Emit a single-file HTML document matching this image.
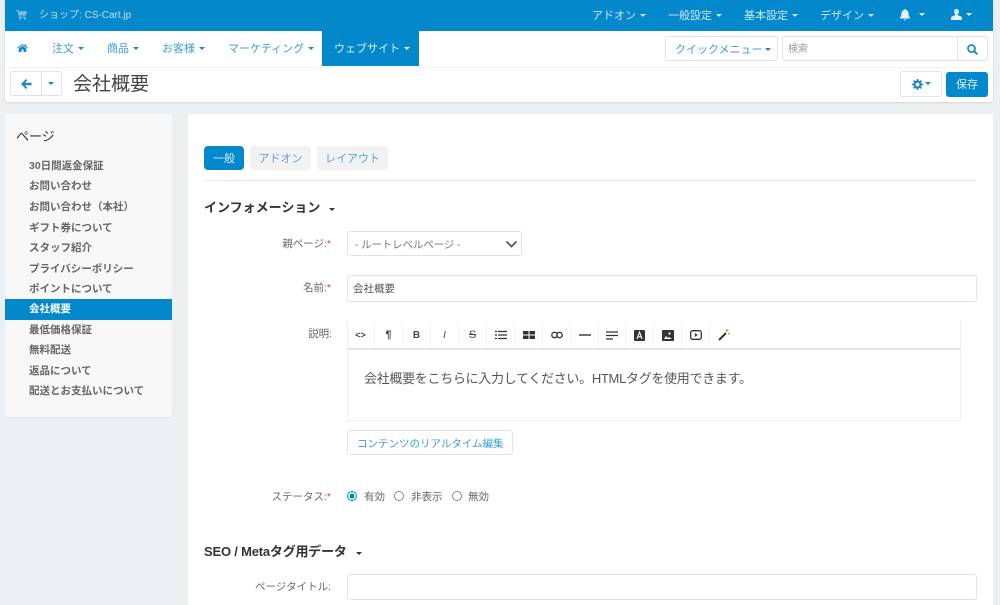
<!DOCTYPE html>
<html lang="ja"><head><meta charset="utf-8">
<style>
*{box-sizing:border-box}
html,body{margin:0;padding:0}
body{width:1000px;height:605px;overflow:hidden;position:relative;background:#edf0f3;font-family:"Liberation Sans","Noto Sans CJK JP",sans-serif;font-size:11px;color:#555}
.a{position:absolute;white-space:nowrap}
.car{display:inline-block;width:0;height:0;border-left:3.5px solid transparent;border-right:3.5px solid transparent;border-top:3.5px solid currentColor;vertical-align:2px;margin-left:3.5px}
.top{color:#cfe8f5;font-size:11px;line-height:14px;top:9px}
.nav{color:#3b9fd6;font-size:11px;line-height:14px;top:42px}
.box{position:absolute;background:#fff;border:1px solid #dfe4e8;border-radius:3px}
.side{left:29px;font-size:10.5px;font-weight:bold;color:#666;line-height:14px}
.lab{text-align:right;right:668px;font-size:10.5px;color:#666;line-height:14px}
.lab i{color:#e33;font-style:normal}
.tb{position:absolute;top:322px;width:28px;height:26px;border-right:1px solid #f3f3f3;display:flex;align-items:center;justify-content:center;font-size:10px;color:#444}
</style></head><body>
<div class="a" style="left:5px;top:0;width:988px;height:102px;background:#fff;border-radius:0 0 3px 3px;box-shadow:0 1px 2px rgba(0,0,0,.12)"></div>
<div class="a" style="left:5px;top:0;width:988px;height:31px;background:#0388cc"></div>
<svg class="a" style="left:16px;top:9px" width="12" height="11" viewBox="0 0 12 11"><path d="M0 1h2.200l.5 1.200H11L9.800 6.500H3.600l.3 1.200H10v1H3L1.600 2H0z" fill="#7dbfe3"/><circle cx="4" cy="9.800" r="1" fill="#7dbfe3"/><circle cx="9" cy="9.800" r="1" fill="#7dbfe3"/></svg>
<div class="a top" style="left:39px;font-size:10px;color:#bfe0f2">ショップ: CS-Cart.jp</div>
<div class="a top" style="left:592px">アドオン<span class="car"></span></div>
<div class="a top" style="left:668px">一般設定<span class="car"></span></div>
<div class="a top" style="left:744px">基本設定<span class="car"></span></div>
<div class="a top" style="left:820px">デザイン<span class="car"></span></div>
<svg class="a" style="left:899px;top:9px" width="12" height="12" viewBox="0 0 12 12"><path d="M6 0a1 1 0 0 1 1 1c2 .5 2.600 2 2.600 4 0 2 .9 3 1.400 3.600V9.500H1V8.600C1.500 8 2.400 7 2.400 5c0-2 .6-3.500 2.600-4a1 1 0 0 1 1-1zM4.800 10.200h2.400a1.200 1.200 0 0 1-2.400 0z" fill="#e3f1f9"/></svg>
<div class="a" style="left:915px;top:9px;color:#e3f1f9"><span class="car"></span></div>
<svg class="a" style="left:951px;top:9px" width="11" height="11" viewBox="0 0 11 11"><path d="M5.500 0c1.500 0 2.300 1.100 2.300 2.600 0 1.200-.5 2.200-1.100 2.800v.8c1.700.5 4.300 1 4.300 2.700V11H0V8.900c0-1.700 2.600-2.200 4.300-2.700v-.8C3.700 4.800 3.200 3.800 3.200 2.600 3.200 1.100 4 0 5.500 0z" fill="#e3f1f9"/></svg>
<div class="a" style="left:962px;top:9px;color:#e3f1f9"><span class="car"></span></div>

<svg class="a" style="left:17px;top:44px" width="11" height="8" viewBox="0 0 11 8"><path d="M5.500 0L0 3.800l.6.700 4.900-3.400 4.900 3.400.6-.7-1.800-1.300V.4H7.800v1.200zM1.700 4.500V8h2.800V5.600h2V8h2.800V4.500L5.500 1.900z" fill="#1b87c9"/></svg>
<div class="a nav" style="left:52px">注文<span class="car" style="color:#1b87c9"></span></div>
<div class="a nav" style="left:107px">商品<span class="car" style="color:#1b87c9"></span></div>
<div class="a nav" style="left:162px">お客様<span class="car" style="color:#1b87c9"></span></div>
<div class="a nav" style="left:228px">マーケティング<span class="car" style="color:#1b87c9"></span></div>
<div class="a" style="left:322px;top:31px;width:97px;height:35px;background:#0388cc"></div>
<div class="a nav" style="left:334px;color:#e3f1f9">ウェブサイト<span class="car"></span></div>
<div class="a" style="left:5px;top:67px;width:988px;height:1px;background:#f2f2f2"></div>
<div class="box" style="left:665px;top:36px;width:113px;height:25px"></div>
<div class="a nav" style="left:675px;top:43px;">クイックメニュー<span class="car" style="color:#1b87c9;margin-left:2px"></span></div>
<div class="box" style="left:782px;top:36px;width:206px;height:25px"></div>
<div class="a" style="left:957px;top:37px;width:1px;height:23px;background:#dfe4e8"></div>
<div class="a" style="left:788px;top:43px;font-size:10px;line-height:14px;color:#999">検索</div>
<svg class="a" style="left:967px;top:44px" width="11" height="11" viewBox="0 0 11 11"><circle cx="4.500" cy="4.500" r="3.500" fill="none" stroke="#1b87c9" stroke-width="1.700"/><path d="M7 7l3.300 3.300" stroke="#1b87c9" stroke-width="2"/></svg>

<div class="box" style="left:10px;top:71px;width:52px;height:25px"></div>
<div class="a" style="left:41px;top:72px;width:1px;height:23px;background:#dfe4e8"></div>
<svg class="a" style="left:21px;top:79px" width="11" height="10" viewBox="0 0 11 10"><path d="M5 0L0 5l5 5 1.300-1.300L4 6.200h6.500V3.800H4l2.300-2.500z" fill="#1b87c9"/></svg>
<div class="a" style="left:44px;top:78px;color:#1b87c9"><span class="car"></span></div>
<div class="a" style="left:73px;top:73px;font-size:19px;line-height:24px;color:#444">会社概要</div>
<div class="box" style="left:900px;top:71px;width:42px;height:26px"></div>
<svg class="a" style="left:912px;top:79px" width="11" height="11" viewBox="0 0 11 11"><circle cx="5.500" cy="5.500" r="3" fill="none" stroke="#1b87c9" stroke-width="2.200"/><path d="M5.500 0v11M0 5.500h11M1.600 1.600l7.800 7.800M9.400 1.600L1.600 9.400" stroke="#1b87c9" stroke-width="1.600" stroke-dasharray="2 7.200 2 0"/></svg>
<div class="a" style="left:921px;top:78px;color:#1b87c9"><span class="car"></span></div>
<div class="a" style="left:946px;top:72px;width:42px;height:25px;background:#0388cc;border-radius:3px;color:#e3f1f9;font-size:11px;text-align:center;line-height:26px">保存</div>

<!-- sidebar -->
<div class="a" style="left:5px;top:114px;width:167px;height:303px;background:#f8f8f8;border-radius:3px;box-shadow:0 1px 1px rgba(0,0,0,.06)"></div>
<div class="a" style="left:16px;top:128px;font-size:13px;line-height:17px;color:#333">ページ</div>
<div class="a side" style="top:159px">30日間返金保証</div>
<div class="a side" style="top:179px">お問い合わせ</div>
<div class="a side" style="top:200px">お問い合わせ（本社）</div>
<div class="a side" style="top:221px">ギフト券について</div>
<div class="a side" style="top:241px">スタッフ紹介</div>
<div class="a side" style="top:262px">プライバシーポリシー</div>
<div class="a side" style="top:282px">ポイントについて</div>
<div class="a" style="left:5px;top:299px;width:167px;height:21px;background:#0388cc"></div>
<div class="a side" style="top:302px;color:#fff">会社概要</div>
<div class="a side" style="top:323px">最低価格保証</div>
<div class="a side" style="top:343px">無料配送</div>
<div class="a side" style="top:364px">返品について</div>
<div class="a side" style="top:384px">配送とお支払いについて</div>

<!-- main -->
<div class="a" style="left:188px;top:114px;width:805px;height:491px;background:#fff;border-radius:3px 3px 0 0"></div>
<div class="a" style="left:204px;top:146px;width:40px;height:24px;background:#0388cc;border-radius:4px;color:#d5ebf7;text-align:center;line-height:26px;font-size:11px">一般</div>
<div class="a" style="left:250px;top:146px;width:61px;height:24px;background:#f2f2f2;border-radius:4px;color:#5f9fcb;text-align:center;line-height:26px;font-size:11px">アドオン</div>
<div class="a" style="left:317px;top:146px;width:71px;height:24px;background:#f2f2f2;border-radius:4px;color:#5f9fcb;text-align:center;line-height:26px;font-size:11px">レイアウト</div>
<div class="a" style="left:204px;top:180px;width:772px;height:1px;background:#e8e8e8"></div>
<div class="a" style="left:204px;top:199px;font-size:13px;font-weight:bold;line-height:17px;color:#333">インフォメーション<span class="car" style="margin-left:9px;vertical-align:1px"></span></div>

<div class="a lab" style="top:237px;right:669px">親ページ:<i>*</i></div>
<div class="box" style="left:347px;top:231px;width:175px;height:25px"></div>
<div class="a" style="left:355px;top:238px;font-size:10.5px;line-height:14px;color:#777;letter-spacing:-.15px">- ルートレベルページ -</div>
<svg class="a" style="left:505px;top:240px" width="13" height="8" viewBox="0 0 13 8"><path d="M1.500 1.500l5 5 5-5" fill="none" stroke="#555" stroke-width="1.700"/></svg>

<div class="a lab" style="top:281px;right:669px">名前:<i>*</i></div>
<div class="box" style="left:347px;top:275px;width:630px;height:27px"></div>
<div class="a" style="left:353px;top:282px;font-size:10.5px;line-height:14px;color:#555">会社概要</div>

<div class="a lab" style="top:327px;right:668px">説明:</div>
<div class="a" style="left:347px;top:321px;width:614px;height:100px;background:#fff;border:1px solid #f0f0f0;border-top:0"></div>
<div class="a" style="left:347px;top:348px;width:614px;height:2px;background:#e6e6e6"></div>
<div class="tb" style="left:347px;font-weight:bold;font-size:9px">&lt;&gt;</div>
<div class="tb" style="left:375px;font-weight:bold;font-size:11px">¶</div>
<div class="tb" style="left:403px;font-weight:bold;font-size:10px">B</div>
<div class="tb" style="left:431px;font-style:italic;font-size:10px">I</div>
<div class="tb" style="left:459px;text-decoration:line-through;font-size:11px">S</div>
<div class="tb" style="left:487px"><svg width="12" height="10" viewBox="0 0 12 10"><path d="M3 1.500h9M3 5h9M3 8.500h9" stroke="#333" stroke-width="1.300"/><path d="M0 1.500h2M0 5h2M0 8.500h2" stroke="#333" stroke-width="1.300"/></svg></div>
<div class="tb" style="left:515px"><svg width="12" height="10" viewBox="0 0 12 10"><path d="M0 1h5.500v3.500H0zM6.500 1H12v3.500H6.500zM0 5.500h5.500V9H0zM6.500 5.500H12V9H6.500z" fill="#333"/></svg></div>
<div class="tb" style="left:543px"><svg width="12" height="8" viewBox="0 0 12 8"><circle cx="3.500" cy="4" r="2.700" fill="none" stroke="#333" stroke-width="1.300"/><circle cx="8.500" cy="4" r="2.700" fill="none" stroke="#333" stroke-width="1.300"/></svg></div>
<div class="tb" style="left:571px"><svg width="12" height="4" viewBox="0 0 12 4"><path d="M0 2h12" stroke="#333" stroke-width="1.400"/></svg></div>
<div class="tb" style="left:598px"><svg width="12" height="9" viewBox="0 0 12 9"><path d="M0 1h12M0 4.500h12M0 8h7" stroke="#333" stroke-width="1.300"/></svg></div>
<div class="tb" style="left:626px"><svg width="11" height="11" viewBox="0 0 11 11"><rect width="11" height="11" rx="1" fill="#333"/><path d="M3 9l2.500-7 2.500 7M3.800 6.800h3.400" stroke="#fff" stroke-width="1.100" fill="none"/></svg></div>
<div class="tb" style="left:654px"><svg width="12" height="11" viewBox="0 0 12 11"><rect width="12" height="11" rx="1" fill="#333"/><circle cx="7.500" cy="3.500" r="1.100" fill="#fff"/><path d="M2 9l2-3 2 2 1-1 3 2z" fill="#fff"/></svg></div>
<div class="tb" style="left:682px"><svg width="12" height="10" viewBox="0 0 12 10"><rect x=".7" y=".7" width="10.600" height="8.600" rx="2" fill="none" stroke="#333" stroke-width="1.300"/><path d="M4.800 3l3 2-3 2z" fill="#333"/></svg></div>
<div class="tb" style="left:710px;border:0"><svg width="12" height="12" viewBox="0 0 12 12"><path d="M1 11l7-7" stroke="#333" stroke-width="2"/><path d="M9 0v3M7.500 1.500h3M11 3.500v2M10 4.500h2" stroke="#b58a2a" stroke-width=".8"/></svg></div>
<div class="a" style="left:364px;top:370px;font-size:13px;line-height:18px;color:#555;letter-spacing:-.3px">会社概要をこちらに入力してください。HTMLタグを使用できます。</div>

<div class="box" style="left:347px;top:430px;width:166px;height:25px"></div>
<div class="a" style="left:357px;top:437px;font-size:10.5px;line-height:14px;color:#3b9fd6">コンテンツのリアルタイム編集</div>

<div class="a lab" style="top:490px;right:669px">ステータス:<i>*</i></div>
<svg class="a" style="left:347px;top:491px" width="10" height="10" viewBox="0 0 10 10"><circle cx="5" cy="5" r="4.500" fill="#fff" stroke="#0388cc"/><circle cx="5" cy="5" r="2.600" fill="#0388cc"/></svg>
<div class="a" style="left:364px;top:490px;font-size:10.5px;line-height:14px;color:#666">有効</div>
<svg class="a" style="left:394px;top:491px" width="10" height="10" viewBox="0 0 10 10"><circle cx="5" cy="5" r="4.500" fill="#fff" stroke="#888"/></svg>
<div class="a" style="left:411px;top:490px;font-size:10.5px;line-height:14px;color:#666">非表示</div>
<svg class="a" style="left:452px;top:491px" width="10" height="10" viewBox="0 0 10 10"><circle cx="5" cy="5" r="4.500" fill="#fff" stroke="#888"/></svg>
<div class="a" style="left:468px;top:490px;font-size:10.5px;line-height:14px;color:#666">無効</div>

<div class="a" style="left:204px;top:543px;font-size:13px;font-weight:bold;line-height:17px;color:#333;letter-spacing:-.2px">SEO / Metaタグ用データ<span class="car" style="margin-left:9px;vertical-align:1px"></span></div>
<div class="a lab" style="top:580px;right:669px">ページタイトル:</div>
<div class="box" style="left:347px;top:574px;width:630px;height:26px"></div>
</body></html>
